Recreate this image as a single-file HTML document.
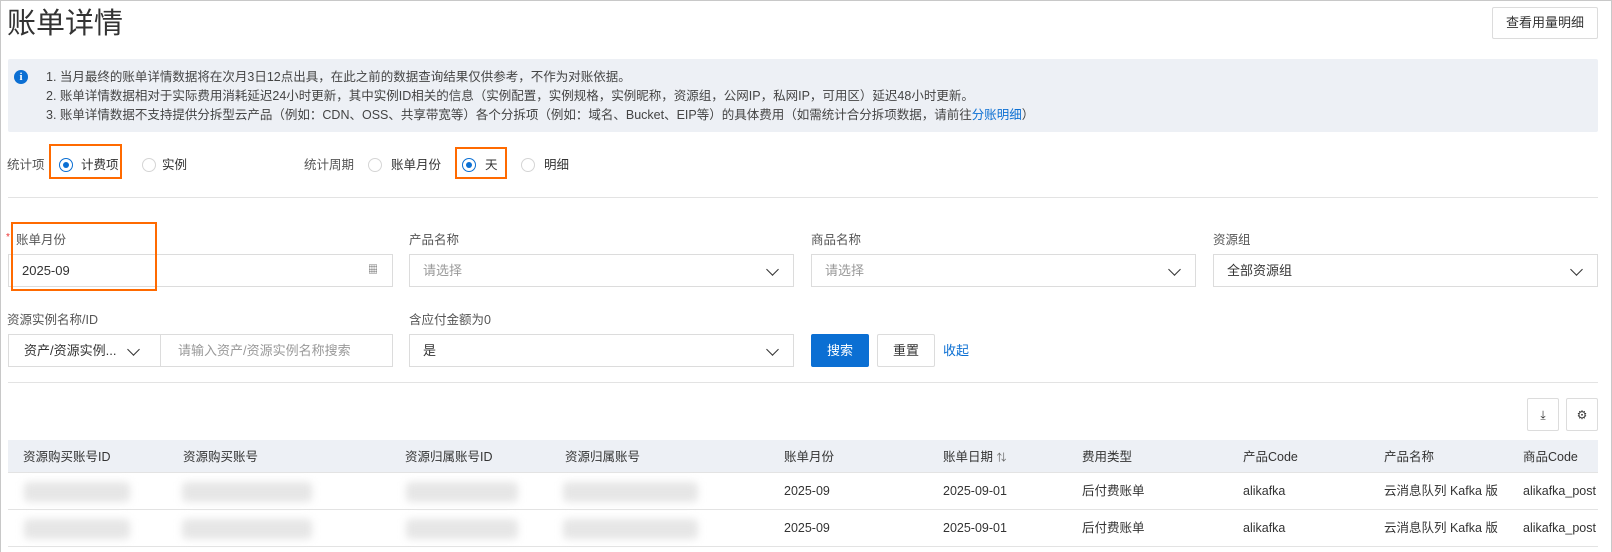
<!DOCTYPE html>
<html><head><meta charset="utf-8"><style>
*{margin:0;padding:0;box-sizing:border-box}
body{width:1612px;height:552px;background:#fff;font-family:"Liberation Sans","Noto Sans CJK SC",sans-serif;color:#333;font-size:12.5px;line-height:16px;position:relative;overflow:hidden}
.frame{position:absolute;left:0;top:0;width:1612px;height:552px;border:1px solid #c8c8c8;border-bottom:none}
.a{position:absolute;white-space:nowrap;line-height:16px}
.title{left:7px;top:6px;font-size:29px;line-height:36px;color:#333}
.btn{position:absolute;border:1px solid #dcdcdc;background:#fff;display:flex;align-items:center;justify-content:center;font-size:13px;color:#333;border-radius:2px}
.info{position:absolute;left:8px;top:59px;width:1590px;height:73px;background:#edf0f5;border-radius:2px}
.info div{position:absolute;left:38px;font-size:12.5px;color:#444;line-height:16px}
.icon{position:absolute;left:6px;top:11px;width:14px;height:14px;border-radius:50%;background:#0b6fd3;color:#fff;font-size:11px;font-weight:bold;text-align:center;line-height:14px;font-family:"Liberation Serif",serif}
.radio{position:absolute;width:14px;height:14px;border-radius:50%;border:1px solid #d5d5d5;background:#fff}
.radio.on{border-color:#0b6fd3}
.radio.on::after{content:"";position:absolute;left:3px;top:3px;width:6px;height:6px;border-radius:50%;background:#0b6fd3}
.ob{position:absolute;border:2.5px solid #ff6a00}
.hr{position:absolute;left:8px;width:1590px;height:1px;background:#e3e3e3}
.lbl{font-size:12.5px;color:#555}
.inp{position:absolute;height:33px;border:1px solid #dcdcdc;background:#fff;display:flex;align-items:center;padding-left:13px;font-size:13px;color:#333}
.ph{color:#999}
.chev{position:absolute;right:16px;top:10px;width:9px;height:9px;border-right:1.5px solid #333;border-bottom:1.5px solid #333;transform:rotate(45deg)}
.th{position:absolute;left:8px;top:440px;width:1590px;height:32px;background:#edf0f5}
.row{position:absolute;left:8px;width:1590px;height:1px;background:#e3e3e3}
.c{position:absolute;font-size:12.5px;color:#333;line-height:16px;white-space:nowrap}
.blur{position:absolute;height:20px;background:#e6e6e6;filter:blur(4px);border-radius:4px}
</style></head><body>
<div class="frame"></div>
<div class="a title">账单详情</div>
<div class="btn" style="left:1492px;top:7px;width:106px;height:32px">查看用量明细</div>
<div class="info">
<span class="icon">i</span>
<div style="top:10px">1. 当月最终的账单详情数据将在次月3日12点出具，在此之前的数据查询结果仅供参考，不作为对账依据。</div>
<div style="top:29px">2. 账单详情数据相对于实际费用消耗延迟24小时更新，其中实例ID相关的信息（实例配置，实例规格，实例昵称，资源组，公网IP，私网IP，可用区）延迟48小时更新。</div>
<div style="top:48px">3. 账单详情数据不支持提供分拆型云产品（例如：CDN、OSS、共享带宽等）各个分拆项（例如：域名、Bucket、EIP等）的具体费用（如需统计合分拆项数据，请前往<span style="color:#0b6fd3">分账明细</span>）</div>
</div>
<div class="a lbl" style="left:7px;top:157px">统计项</div>
<div class="radio on" style="left:59px;top:158px"></div><div class="a" style="left:81px;top:157px">计费项</div>
<div class="radio" style="left:142px;top:158px"></div><div class="a" style="left:162px;top:157px">实例</div>
<div class="a lbl" style="left:304px;top:157px">统计周期</div>
<div class="radio" style="left:368px;top:158px"></div><div class="a" style="left:391px;top:157px">账单月份</div>
<div class="radio on" style="left:462px;top:158px"></div><div class="a" style="left:485px;top:157px">天</div>
<div class="radio" style="left:521px;top:158px"></div><div class="a" style="left:544px;top:157px">明细</div>
<div class="ob" style="left:49px;top:144px;width:73px;height:35px"></div>
<div class="ob" style="left:455px;top:147px;width:52px;height:32px"></div>
<div class="hr" style="top:197px"></div>

<div class="a" style="left:6px;top:230px;color:#e33;font-size:10px">*</div>
<div class="a lbl" style="left:16px;top:232px">账单月份</div>
<div class="a lbl" style="left:409px;top:232px">产品名称</div>
<div class="a lbl" style="left:811px;top:232px">商品名称</div>
<div class="a lbl" style="left:1213px;top:232px">资源组</div>
<div class="inp" style="left:8px;top:254px;width:385px">2025-09<span class="a" style="right:14px;top:8px;font-size:10px;color:#555">▦</span></div>
<div class="inp" style="left:409px;top:254px;width:385px"><span class="ph">请选择</span><span class="chev"></span></div>
<div class="inp" style="left:811px;top:254px;width:385px"><span class="ph">请选择</span><span class="chev"></span></div>
<div class="inp" style="left:1213px;top:254px;width:385px">全部资源组<span class="chev"></span></div>
<div class="ob" style="left:11px;top:222px;width:146px;height:69px"></div>

<div class="a lbl" style="left:7px;top:312px">资源实例名称/ID</div>
<div class="a lbl" style="left:409px;top:312px">含应付金额为0</div>
<div class="inp" style="left:8px;top:334px;width:153px;padding-left:15px">资产/资源实例...<span class="chev" style="right:22px"></span></div>
<div class="inp" style="left:160px;top:334px;width:233px;padding-left:17px"><span class="ph">请输入资产/资源实例名称搜索</span></div>
<div class="inp" style="left:409px;top:334px;width:385px">是<span class="chev"></span></div>
<div class="btn" style="left:811px;top:334px;width:58px;height:33px;background:#0b6fd3;border-color:#0b6fd3;color:#fff">搜索</div>
<div class="btn" style="left:877px;top:334px;width:58px;height:33px">重置</div>
<div class="a" style="left:943px;top:343px;color:#0b6fd3;font-size:13px">收起</div>
<div class="hr" style="top:382px"></div>

<div class="btn" style="left:1527px;top:398px;width:32px;height:33px;font-size:12px">⤓</div>
<div class="btn" style="left:1566px;top:398px;width:32px;height:33px;font-size:12px">⚙</div>

<div class="th"></div>
<div class="c" style="left:23px;top:449px">资源购买账号ID</div>
<div class="c" style="left:183px;top:449px">资源购买账号</div>
<div class="c" style="left:405px;top:449px">资源归属账号ID</div>
<div class="c" style="left:565px;top:449px">资源归属账号</div>
<div class="c" style="left:784px;top:449px">账单月份</div>
<div class="c" style="left:943px;top:449px">账单日期 <span style="font-size:10px;color:#666">⇅</span></div>
<div class="c" style="left:1082px;top:449px">费用类型</div>
<div class="c" style="left:1243px;top:449px">产品Code</div>
<div class="c" style="left:1384px;top:449px">产品名称</div>
<div class="c" style="left:1523px;top:449px">商品Code</div>
<div class="row" style="top:472px"></div>
<div class="row" style="top:509px"></div>
<div class="row" style="top:546px"></div>

<div class="blur" style="left:24px;top:482px;width:106px"></div>
<div class="blur" style="left:182px;top:482px;width:130px"></div>
<div class="blur" style="left:406px;top:482px;width:112px"></div>
<div class="blur" style="left:563px;top:482px;width:135px"></div>
<div class="c" style="left:784px;top:483px">2025-09</div>
<div class="c" style="left:943px;top:483px">2025-09-01</div>
<div class="c" style="left:1082px;top:483px">后付费账单</div>
<div class="c" style="left:1243px;top:483px">alikafka</div>
<div class="c" style="left:1384px;top:483px">云消息队列 Kafka 版</div>
<div class="c" style="left:1523px;top:483px">alikafka_post</div>

<div class="blur" style="left:24px;top:519px;width:106px"></div>
<div class="blur" style="left:182px;top:519px;width:130px"></div>
<div class="blur" style="left:406px;top:519px;width:112px"></div>
<div class="blur" style="left:563px;top:519px;width:135px"></div>
<div class="c" style="left:784px;top:520px">2025-09</div>
<div class="c" style="left:943px;top:520px">2025-09-01</div>
<div class="c" style="left:1082px;top:520px">后付费账单</div>
<div class="c" style="left:1243px;top:520px">alikafka</div>
<div class="c" style="left:1384px;top:520px">云消息队列 Kafka 版</div>
<div class="c" style="left:1523px;top:520px">alikafka_post</div>
</body></html>
